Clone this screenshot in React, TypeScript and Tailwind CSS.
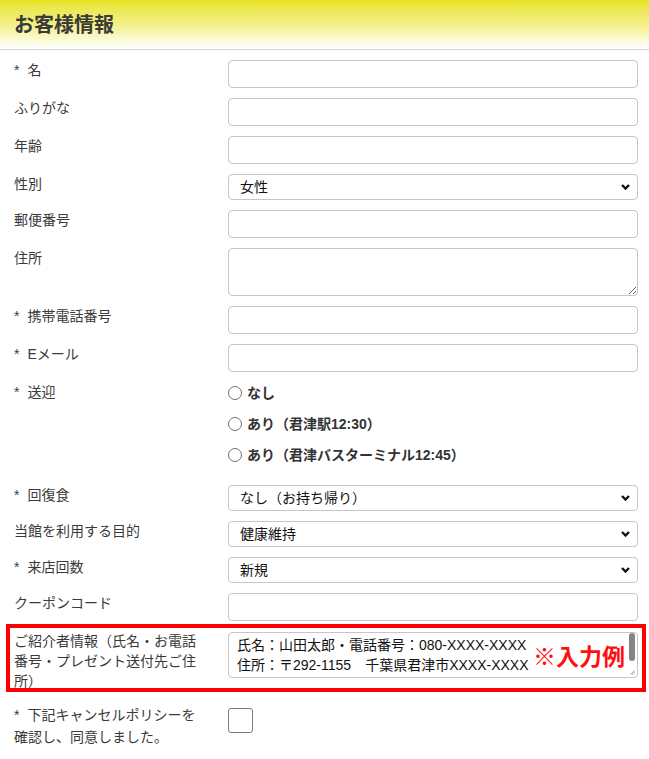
import React from "react";

const FONT = "font-['Liberation_Sans','Noto_Sans_CJK_JP',sans-serif]";

function Label({
  children,
  required,
  className = "",
}: {
  children: React.ReactNode;
  required?: boolean;
  className?: string;
}) {
  return (
    <div className={`w-[228px] shrink-0 pl-[14px] pr-[30px] text-[14px] leading-[20px] text-[#3a3a3a] ${className}`}>
      {required && <span className="mr-[8px]">*</span>}
      {children}
    </div>
  );
}

function Row({
  label,
  required,
  children,
  mb = "mb-[10px]",
}: {
  label: string;
  required?: boolean;
  children: React.ReactNode;
  mb?: string;
}) {
  return (
    <div className={`flex ${mb}`}>
      <Label required={required}>{label}</Label>
      <div className="flex-1 pr-[11px]">{children}</div>
    </div>
  );
}

function TextInput() {
  return (
    <input
      type="text"
      className="block w-full h-[28px] border border-[#c6c6c6] rounded-[4px] bg-white px-[8px] text-[14px] outline-none"
    />
  );
}

function Select({ value }: { value: string }) {
  return (
    <div className="relative h-[26px]">
      <select
        defaultValue={value}
        className="block w-full h-[26px] appearance-none border border-[#c6c6c6] rounded-[4px] bg-white pl-[11px] pr-[24px] text-[14px] text-[#111] outline-none"
      >
        <option value={value}>{value}</option>
      </select>
      <svg
        className="absolute right-[8px] top-[10px] pointer-events-none"
        width="9"
        height="6"
        viewBox="0 0 9 6"
      >
        <polyline points="1,1 4.5,4.5 8,1" fill="none" stroke="#111" strokeWidth="2.4" />
      </svg>
    </div>
  );
}

function Radio({ label }: { label: string }) {
  return (
    <label className="flex items-center h-[22px]">
      <input
        type="radio"
        name="pickup"
        className="appearance-none w-[14px] h-[14px] rounded-full border border-[#707070] bg-white m-0 shrink-0"
      />
      <span className="ml-[5px] text-[14px] font-bold text-[#333]">{label}</span>
    </label>
  );
}

export default function App() {
  return (
    <div className={`w-[649px] min-h-[759px] bg-white ${FONT}`}>
      <div className="h-[50px] border-b border-[#d4d4d4] bg-linear-to-b from-[#e8e31a] via-[#f3f085] to-white flex items-center pl-[14px]">
        <h1 className="text-[20px] font-bold text-[#3a3a3a] leading-none">お客様情報</h1>
      </div>

      <div className="pt-[10px]">
        <Row label="名" required>
          <TextInput />
        </Row>
        <Row label="ふりがな">
          <TextInput />
        </Row>
        <Row label="年齢">
          <TextInput />
        </Row>
        <Row label="性別">
          <Select value="女性" />
        </Row>
        <Row label="郵便番号">
          <TextInput />
        </Row>
        <Row label="住所">
          <textarea className="block w-full h-[48px] border border-[#c6c6c6] rounded-[4px] bg-white px-[8px] text-[14px] outline-none resize-y" />
        </Row>
        <Row label="携帯電話番号" required>
          <TextInput />
        </Row>
        <Row label="Eメール" required>
          <TextInput />
        </Row>
        <Row label="送迎" required>
          <div className="flex flex-col gap-[9px] pb-[9px]">
            <Radio label="なし" />
            <Radio label="あり（君津駅12:30）" />
            <Radio label="あり（君津バスターミナル12:45）" />
          </div>
        </Row>
        <Row label="回復食" required>
          <Select value="なし（お持ち帰り）" />
        </Row>
        <Row label="当館を利用する目的">
          <Select value="健康維持" />
        </Row>
        <Row label="来店回数" required>
          <Select value="新規" />
        </Row>
        <Row label="クーポンコード" mb="mb-[3px]">
          <TextInput />
        </Row>

        <div className="ml-[6px] w-[640px] h-[68px] border-[4px] border-[#ff0000] flex">
          <div className="w-[218px] shrink-0 pl-[4px] pr-[30px] pt-[3px] text-[14px] leading-[20px] text-[#3a3a3a]">
            ご紹介者情報（氏名・お電話番号・プレゼント送付先ご住所）
          </div>
          <div className="flex-1 pr-[4px] pt-[4px]">
            <div className="relative h-[46px] border border-[#c6c6c6] rounded-[4px] bg-white overflow-hidden">
              <div className="pl-[8px] pt-[2px] text-[14px] leading-[20px] text-[#111] whitespace-nowrap">
                <div>氏名：山田太郎・電話番号：080-XXXX-XXXX</div>
                <div>住所：〒292-1155　千葉県君津市XXXX-XXXX</div>
              </div>
              <div className="absolute right-[12px] top-[8px] text-[23px] leading-[28px] font-bold text-[#ff1010] font-['Noto_Sans_CJK_JP',sans-serif]">
                ※入力例
              </div>
              <div className="absolute right-[2px] top-0 w-[6px] h-[28px] rounded-full bg-[#858585]" />
              <svg className="absolute right-[2px] bottom-[2px]" width="5" height="5" viewBox="0 0 5 5">
                <line x1="0.5" y1="4.5" x2="4.5" y2="0.5" stroke="#777" strokeWidth="0.8" />
                <line x1="2.5" y1="4.5" x2="4.5" y2="2.5" stroke="#777" strokeWidth="0.8" />
              </svg>
            </div>
          </div>
        </div>

        <div className="flex mt-[12px]">
          <div className="w-[228px] shrink-0 pl-[14px] pr-[30px] text-[14px] leading-[22px] text-[#3a3a3a]">
            <span className="mr-[8px]">*</span>下記キャンセルポリシーを確認し、同意しました。
          </div>
          <div className="flex-1 pt-[4px]">
            <input
              type="checkbox"
              className="appearance-none block w-[25px] h-[25px] border-[1.5px] border-[#7a7a7a] rounded-[3px] bg-white m-0"
            />
          </div>
        </div>
      </div>
    </div>
  );
}
